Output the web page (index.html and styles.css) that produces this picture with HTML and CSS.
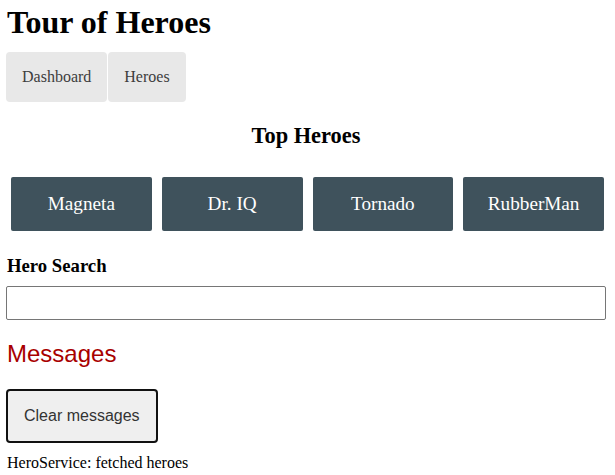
FILE: index.html
```html
<!DOCTYPE html>
<html lang="en">
<head>
<meta charset="utf-8">
<title>Tour of Heroes</title>
<link rel="stylesheet" href="styles.css">
</head>
<body>
<div class="app">
  <h1 class="title">Tour of Heroes</h1>
  <nav class="nav">
    <a class="nav-link" href="#">Dashboard</a>
    <a class="nav-link" href="#">Heroes</a>
  </nav>
  <h2 class="top-title">Top Heroes</h2>
  <div class="heroes-menu">
    <a class="hero" href="#">Magneta</a>
    <a class="hero" href="#">Dr. IQ</a>
    <a class="hero" href="#">Tornado</a>
    <a class="hero" href="#">RubberMan</a>
  </div>
  <div class="search">
    <label class="search-label" for="search-box">Hero Search</label>
    <input class="search-box" id="search-box" type="text">
  </div>
  <div class="messages">
    <h2 class="messages-title">Messages</h2>
    <button class="clear" type="button">Clear messages</button>
    <div class="message">HeroService: fetched heroes</div>
  </div>
</div>
</body>
</html>
```
FILE: styles.css
```css
html, body {
  margin: 0;
  padding: 0;
  background: #fff;
}
body {
  font-family: "Liberation Serif", "Times New Roman", serif;
  font-size: 16px;
  color: #000;
}
.app {
  padding: 4px 9px 0 6px;
  display: flex;
  flex-direction: column;
}
.title {
  margin: 0 0 0 1px;
  font-size: 32px;
  font-weight: bold;
  line-height: normal;
}
.nav {
  display: flex;
  gap: 1px;
  margin-top: 11px;
}
.nav-link {
  display: block;
  padding: 16px;
  background: #e8e8e8;
  color: #3d3d3d;
  border-radius: 4px;
  text-decoration: none;
  font-size: 16px;
}
.top-title {
  margin: 20.5px 0 0;
  font-size: 22.4px;
  font-weight: bold;
  text-align: center;
  line-height: normal;
}
.heroes-menu {
  display: grid;
  grid-template-columns: repeat(4, 1fr);
  gap: 10px;
  padding: 0 2px 0 5px;
  margin-top: 28.7px;
}
.hero {
  display: block;
  background: #3f525c;
  color: #fff;
  border-radius: 2px;
  padding: 16px;
  font-size: 19.2px;
  text-align: center;
  text-decoration: none;
}
.search {
  display: flex;
  flex-direction: column;
  margin-top: 23.6px;
}
.search-label {
  font-size: 18.72px;
  font-weight: bold;
  margin-left: 1px;
  line-height: normal;
}
.search-box {
  margin: 9px 0 0;
  height: 34px;
  box-sizing: border-box;
  border: 1px solid #767676;
  border-radius: 2px;
  padding: 0 4px;
  font-size: 16px;
}
.messages {
  display: flex;
  flex-direction: column;
  align-items: flex-start;
}
.messages-title {
  margin: 20.6px 0 0 1px;
  color: #a80000;
  font-family: "Liberation Sans", Arial, sans-serif;
  font-weight: normal;
  font-size: 24px;
  line-height: normal;
}
.clear {
  margin-top: 20.8px;
  font-family: "Liberation Sans", Arial, sans-serif;
  font-size: 16px;
  color: #333;
  background: #efefef;
  border: 2px solid #111;
  border-radius: 4px;
  padding: 16px 16px;
  line-height: normal;
}
.message {
  margin: 10.7px 0 0 1px;
  font-size: 16px;
  line-height: normal;
}
```
